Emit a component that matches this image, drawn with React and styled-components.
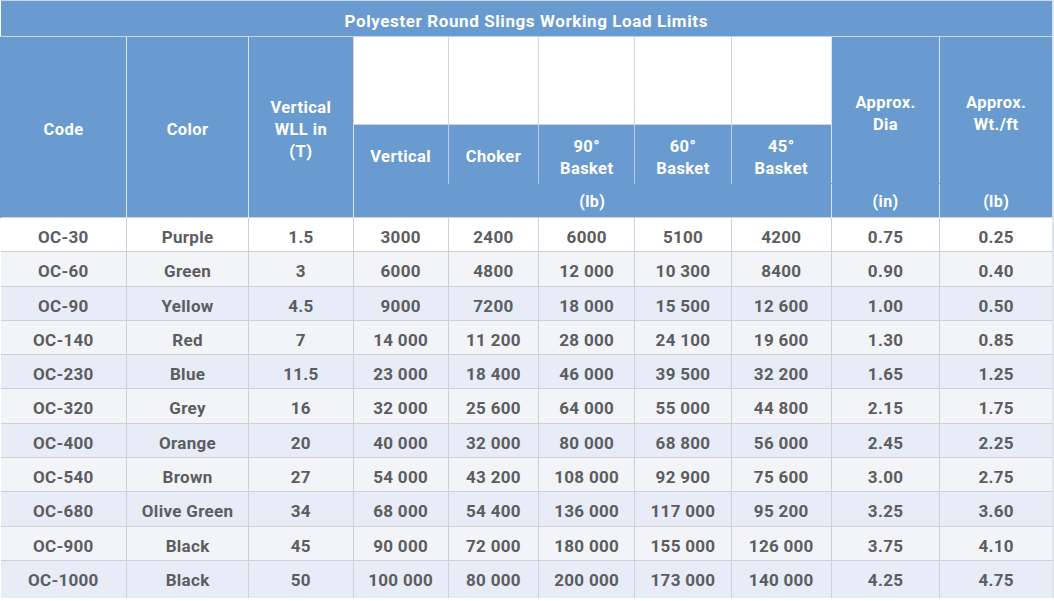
import React from "react";
import styled, { createGlobalStyle } from "styled-components";

const GlobalStyle = createGlobalStyle`
  html, body { margin: 0; padding: 0; background: #ffffff; overflow: hidden; }
  body { font-family: Roboto, "Liberation Sans", sans-serif; }
`;

const BLUE = "#6a9bd0";

const Table = styled.table`
  width: 1054px;
  border-collapse: collapse;
  table-layout: fixed;
  font-family: Roboto, "Liberation Sans", sans-serif;
  border-right: 2px solid #dfe3ea;
  border-top: 1px solid #c9d7ea;
`;

const TitleCell = styled.th`
  height: 36px;
  box-sizing: border-box;
  background: ${BLUE};
  color: #ffffff;
  font-size: 17px;
  font-weight: 700;
  line-height: 20px;
  letter-spacing: 0.6px;
  text-align: center;
  vertical-align: middle;
  padding: 5px 0 0;
  border-bottom: 1px solid #c6d4ea;
`;

const HeadCell = styled.th`
  background: ${BLUE};
  color: #ffffff;
  font-size: 16.5px;
  font-weight: 700;
  line-height: 22px;
  letter-spacing: 0.4px;
  text-align: center;
  vertical-align: middle;
  padding: ${(p) => p.$pad || "5px 0 0"};
  border-left: 1px solid ${(p) => (p.$noLeft ? BLUE : "#dbe4f2")};
  border-bottom: ${(p) => (p.$noBottom ? `1px solid ${BLUE}` : "none")};
  border-top: none;
`;

const BlankCell = styled.th`
  background: #ffffff;
  height: 88px;
  box-sizing: border-box;
  padding: 0;
  border-left: 1px solid #d4d6da;
  border-bottom: 1px solid #c9d7ea;
`;

const SubCell = styled.th`
  height: 59px;
  box-sizing: border-box;
  padding: ${(p) => (p.$twoLine ? "7px 0 0" : "6px 0 0")};
  background: ${BLUE};
  color: #ffffff;
  font-size: 16.5px;
  font-weight: 700;
  line-height: 22px;
  letter-spacing: 0.4px;
  text-align: center;
  vertical-align: middle;
  border-left: 1px solid ${(p) => (p.$first ? "#dbe4f2" : "#b9cde8")};
`;

const UnitCell = styled.th`
  height: 34px;
  box-sizing: border-box;
  padding: 3px 0 0;
  background: ${BLUE};
  color: #ffffff;
  font-size: 16px;
  font-weight: 700;
  line-height: 20px;
  letter-spacing: 0.4px;
  text-align: center;
  vertical-align: middle;
  border-left: 1px solid #dbe4f2;
  border-top: none;
`;

const Row = styled.tr`
  height: ${(p) => (p.$last ? "38px" : "34.3px")};
  background: ${(p) =>
    p.$index === 0 ? "#ffffff" : p.$index % 2 === 1 ? "#f3f4f8" : "#e7ecf6"};
`;

const Cell = styled.td`
  padding: 9px 0 0;
  text-align: center;
  vertical-align: top;
  color: #5b5d61;
  font-size: 17px;
  font-weight: 700;
  line-height: 20px;
  letter-spacing: 0.3px;
  border-left: 1px solid #cdd0d5;
  border-top: 1px solid #cdd0d5;
  &:first-child { border-left: none; }
`;

const widths = [126, 122, 104.5, 95, 90.5, 96, 96.5, 100, 108.5, 113];

const rows = [
  ["OC-30", "Purple", "1.5", "3000", "2400", "6000", "5100", "4200", "0.75", "0.25"],
  ["OC-60", "Green", "3", "6000", "4800", "12 000", "10 300", "8400", "0.90", "0.40"],
  ["OC-90", "Yellow", "4.5", "9000", "7200", "18 000", "15 500", "12 600", "1.00", "0.50"],
  ["OC-140", "Red", "7", "14 000", "11 200", "28 000", "24 100", "19 600", "1.30", "0.85"],
  ["OC-230", "Blue", "11.5", "23 000", "18 400", "46 000", "39 500", "32 200", "1.65", "1.25"],
  ["OC-320", "Grey", "16", "32 000", "25 600", "64 000", "55 000", "44 800", "2.15", "1.75"],
  ["OC-400", "Orange", "20", "40 000", "32 000", "80 000", "68 800", "56 000", "2.45", "2.25"],
  ["OC-540", "Brown", "27", "54 000", "43 200", "108 000", "92 900", "75 600", "3.00", "2.75"],
  ["OC-680", "Olive Green", "34", "68 000", "54 400", "136 000", "117 000", "95 200", "3.25", "3.60"],
  ["OC-900", "Black", "45", "90 000", "72 000", "180 000", "155 000", "126 000", "3.75", "4.10"],
  ["OC-1000", "Black", "50", "100 000", "80 000", "200 000", "173 000", "140 000", "4.25", "4.75"],
];

const angles = ["90°", "60°", "45°"];

export default function App() {
  return (
    <>
      <GlobalStyle />
      <Table>
        <colgroup>
          {widths.map((w, i) => (
            <col key={i} style={{ width: `${w}px` }} />
          ))}
        </colgroup>
        <thead>
          <tr>
            <TitleCell colSpan={10}>Polyester Round Slings Working Load Limits</TitleCell>
          </tr>
          <tr>
            <HeadCell rowSpan={3} $noLeft>Code</HeadCell>
            <HeadCell rowSpan={3}>Color</HeadCell>
            <HeadCell rowSpan={3}>
              Vertical
              <br />
              WLL in
              <br />
              (T)
            </HeadCell>
            <BlankCell />
            <BlankCell />
            <BlankCell />
            <BlankCell />
            <BlankCell />
            <HeadCell rowSpan={2} $pad="8px 0 0" $noBottom>
              Approx.
              <br />
              Dia
            </HeadCell>
            <HeadCell rowSpan={2} $pad="8px 0 0" $noBottom>
              Approx.
              <br />
              Wt./ft
            </HeadCell>
          </tr>
          <tr>
            <SubCell $first>Vertical</SubCell>
            <SubCell>Choker</SubCell>
            {angles.map((a) => (
              <SubCell key={a} $twoLine>
                {a}
                <br />
                Basket
              </SubCell>
            ))}
          </tr>
          <tr>
            <UnitCell colSpan={5}>(lb)</UnitCell>
            <UnitCell>(in)</UnitCell>
            <UnitCell>(lb)</UnitCell>
          </tr>
        </thead>
        <tbody>
          {rows.map((r, i) => (
            <Row key={r[0]} $index={i} $last={i === rows.length - 1}>
              {r.map((v, j) => (
                <Cell key={j}>{v}</Cell>
              ))}
            </Row>
          ))}
        </tbody>
      </Table>
    </>
  );
}
